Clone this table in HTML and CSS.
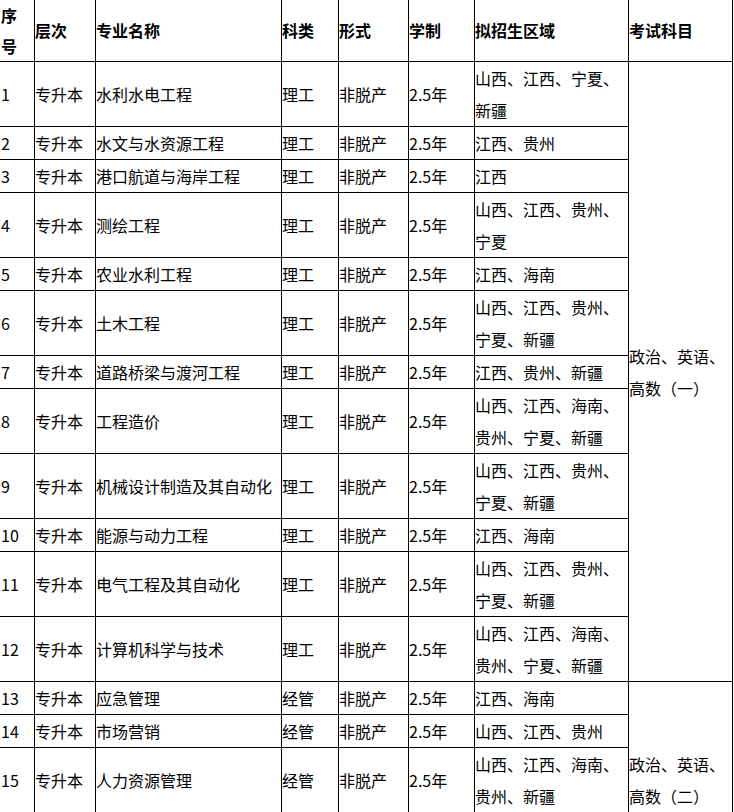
FILE: index.html
```html
<!DOCTYPE html>
<html lang="zh-CN">
<head>
<meta charset="utf-8">
<title>专升本招生专业</title>
<link rel="stylesheet" href="styles.css">
</head>
<body>
<table class="plan">
  <thead>
    <tr>
      <th class="c-no">序<br>号</th>
      <th class="c-level">层次</th>
      <th class="c-major">专业名称</th>
      <th class="c-cat">科类</th>
      <th class="c-form">形式</th>
      <th class="c-years">学制</th>
      <th class="c-area">拟招生区域</th>
      <th class="c-exam">考试科目</th>
    </tr>
  </thead>
  <tbody>
    <tr><td>1</td><td>专升本</td><td>水利水电工程</td><td>理工</td><td>非脱产</td><td>2.5年</td><td>山西、江西、宁夏、新疆</td><td class="exam exam-mid" rowspan="12">政治、英语、高数（一）</td></tr>
    <tr><td>2</td><td>专升本</td><td>水文与水资源工程</td><td>理工</td><td>非脱产</td><td>2.5年</td><td>江西、贵州</td></tr>
    <tr><td>3</td><td>专升本</td><td>港口航道与海岸工程</td><td>理工</td><td>非脱产</td><td>2.5年</td><td>江西</td></tr>
    <tr><td>4</td><td>专升本</td><td>测绘工程</td><td>理工</td><td>非脱产</td><td>2.5年</td><td>山西、江西、贵州、宁夏</td></tr>
    <tr><td>5</td><td>专升本</td><td>农业水利工程</td><td>理工</td><td>非脱产</td><td>2.5年</td><td>江西、海南</td></tr>
    <tr><td>6</td><td>专升本</td><td>土木工程</td><td>理工</td><td>非脱产</td><td>2.5年</td><td>山西、江西、贵州、宁夏、新疆</td></tr>
    <tr><td>7</td><td>专升本</td><td>道路桥梁与渡河工程</td><td>理工</td><td>非脱产</td><td>2.5年</td><td>江西、贵州、新疆</td></tr>
    <tr><td>8</td><td>专升本</td><td>工程造价</td><td>理工</td><td>非脱产</td><td>2.5年</td><td>山西、江西、海南、贵州、宁夏、新疆</td></tr>
    <tr><td>9</td><td>专升本</td><td>机械设计制造及其自动化</td><td>理工</td><td>非脱产</td><td>2.5年</td><td>山西、江西、贵州、宁夏、新疆</td></tr>
    <tr><td>10</td><td>专升本</td><td>能源与动力工程</td><td>理工</td><td>非脱产</td><td>2.5年</td><td>江西、海南</td></tr>
    <tr><td>11</td><td>专升本</td><td>电气工程及其自动化</td><td>理工</td><td>非脱产</td><td>2.5年</td><td>山西、江西、贵州、宁夏、新疆</td></tr>
    <tr><td>12</td><td>专升本</td><td>计算机科学与技术</td><td>理工</td><td>非脱产</td><td>2.5年</td><td>山西、江西、海南、贵州、宁夏、新疆</td></tr>
    <tr><td>13</td><td>专升本</td><td>应急管理</td><td>经管</td><td>非脱产</td><td>2.5年</td><td>江西、海南</td><td class="exam exam-low" rowspan="3">政治、英语、高数（二）</td></tr>
    <tr><td>14</td><td>专升本</td><td>市场营销</td><td>经管</td><td>非脱产</td><td>2.5年</td><td>山西、江西、贵州</td></tr>
    <tr><td>15</td><td>专升本</td><td>人力资源管理</td><td>经管</td><td>非脱产</td><td>2.5年</td><td>山西、江西、海南、贵州、新疆</td></tr>
  </tbody>
</table>
</body>
</html>
```

FILE: styles.css
```css
html, body {
  margin: 0;
  padding: 0;
  background: #fff;
  overflow: hidden;
}

body {
  font-family: "Noto Sans CJK SC", "Noto Sans", sans-serif;
  font-size: 16px;
  color: #000;
}

.plan {
  border-collapse: separate;
  border-spacing: 0;
  table-layout: fixed;
  width: 733px;
}

.plan th,
.plan td {
  box-sizing: border-box;
  border-right: 1px solid #000;
  border-bottom: 1px solid #000;
  padding: 0;
  text-align: left;
  vertical-align: middle;
  line-height: 32px;
  font-weight: normal;
}

.plan th {
  font-weight: bold;
  line-height: 30.5px;
  height: 62px;
}

.plan th.c-no { width: 35px; }
.plan th.c-level { width: 61px; }
.plan th.c-major { width: 186px; }
.plan th.c-cat { width: 57px; }
.plan th.c-form { width: 70px; }
.plan th.c-years { width: 66px; }
.plan th.c-area { width: 154px; }
.plan th.c-exam { width: 104px; }

.plan td:first-child,
.plan th:first-child {
  padding-left: 1px;
}

.plan td.exam-mid {
  vertical-align: middle;
}

.plan td.exam-low {
  vertical-align: bottom;
}
```
